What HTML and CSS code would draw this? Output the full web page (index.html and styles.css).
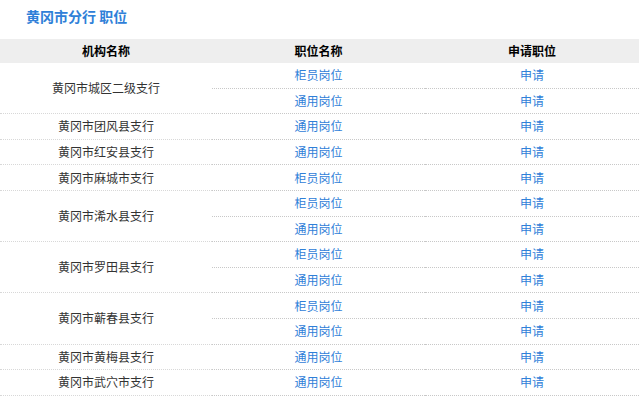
FILE: index.html
```html
<!DOCTYPE html>
<html lang="zh-CN">
<head>
<meta charset="utf-8">
<title>黄冈市分行 职位</title>
<link rel="stylesheet" href="styles.css">
</head>
<body>
<div class="page">
  <h2 class="title">黄冈市分行 职位</h2>
  <table class="jobs">
    <colgroup><col class="c1"><col class="c2"><col class="c3"></colgroup>
    <thead>
      <tr><th>机构名称</th><th>职位名称</th><th>申请职位</th></tr>
    </thead>
    <tbody>
      <tr><td class="org" rowspan="2">黄冈市城区二级支行</td><td><a href="#">柜员岗位</a></td><td><a href="#">申请</a></td></tr>
      <tr><td><a href="#">通用岗位</a></td><td><a href="#">申请</a></td></tr>
      <tr><td class="org">黄冈市团风县支行</td><td><a href="#">通用岗位</a></td><td><a href="#">申请</a></td></tr>
      <tr><td class="org">黄冈市红安县支行</td><td><a href="#">通用岗位</a></td><td><a href="#">申请</a></td></tr>
      <tr><td class="org">黄冈市麻城市支行</td><td><a href="#">柜员岗位</a></td><td><a href="#">申请</a></td></tr>
      <tr><td class="org" rowspan="2">黄冈市浠水县支行</td><td><a href="#">柜员岗位</a></td><td><a href="#">申请</a></td></tr>
      <tr><td><a href="#">通用岗位</a></td><td><a href="#">申请</a></td></tr>
      <tr><td class="org" rowspan="2">黄冈市罗田县支行</td><td><a href="#">柜员岗位</a></td><td><a href="#">申请</a></td></tr>
      <tr><td><a href="#">通用岗位</a></td><td><a href="#">申请</a></td></tr>
      <tr><td class="org" rowspan="2">黄冈市蕲春县支行</td><td><a href="#">柜员岗位</a></td><td><a href="#">申请</a></td></tr>
      <tr><td><a href="#">通用岗位</a></td><td><a href="#">申请</a></td></tr>
      <tr><td class="org">黄冈市黄梅县支行</td><td><a href="#">通用岗位</a></td><td><a href="#">申请</a></td></tr>
      <tr><td class="org">黄冈市武穴市支行</td><td><a href="#">通用岗位</a></td><td><a href="#">申请</a></td></tr>
    </tbody>
  </table>
</div>
</body>
</html>
```
FILE: styles.css
```css
html, body {
  margin: 0;
  padding: 0;
  background: #fff;
}
body {
  font-family: "Noto Sans CJK SC", "Noto Sans", sans-serif;
  font-size: 12px;
  color: #333;
}
.page {
  width: 639px;
}
.title {
  margin: 0 0 13px 0;
  padding: 6px 0 0 26px;
  height: 20px;
  line-height: 20px;
  font-size: 14px;
  font-weight: bold;
  color: #2f80d8;
}
.jobs {
  width: 639px;
  border-collapse: collapse;
  table-layout: fixed;
}
.jobs col.c1 { width: 212px; }
.jobs col.c2 { width: 213px; }
.jobs col.c3 { width: 214px; }
.jobs th {
  height: 24px;
  padding: 0;
  background: #eeeeee;
  color: #000;
  font-weight: bold;
  font-size: 12px;
  line-height: 24px;
  text-align: center;
}
.jobs td {
  height: 24.6px;
  padding: 0;
  text-align: center;
  line-height: 18px;
  border-bottom: 1px dotted #c8c8c8;
  vertical-align: middle;
}
.jobs td.org {
  color: #333;
  border-bottom-color: #d8d8d8;
}
.jobs a {
  color: #2f80d8;
  text-decoration: none;
}
```
